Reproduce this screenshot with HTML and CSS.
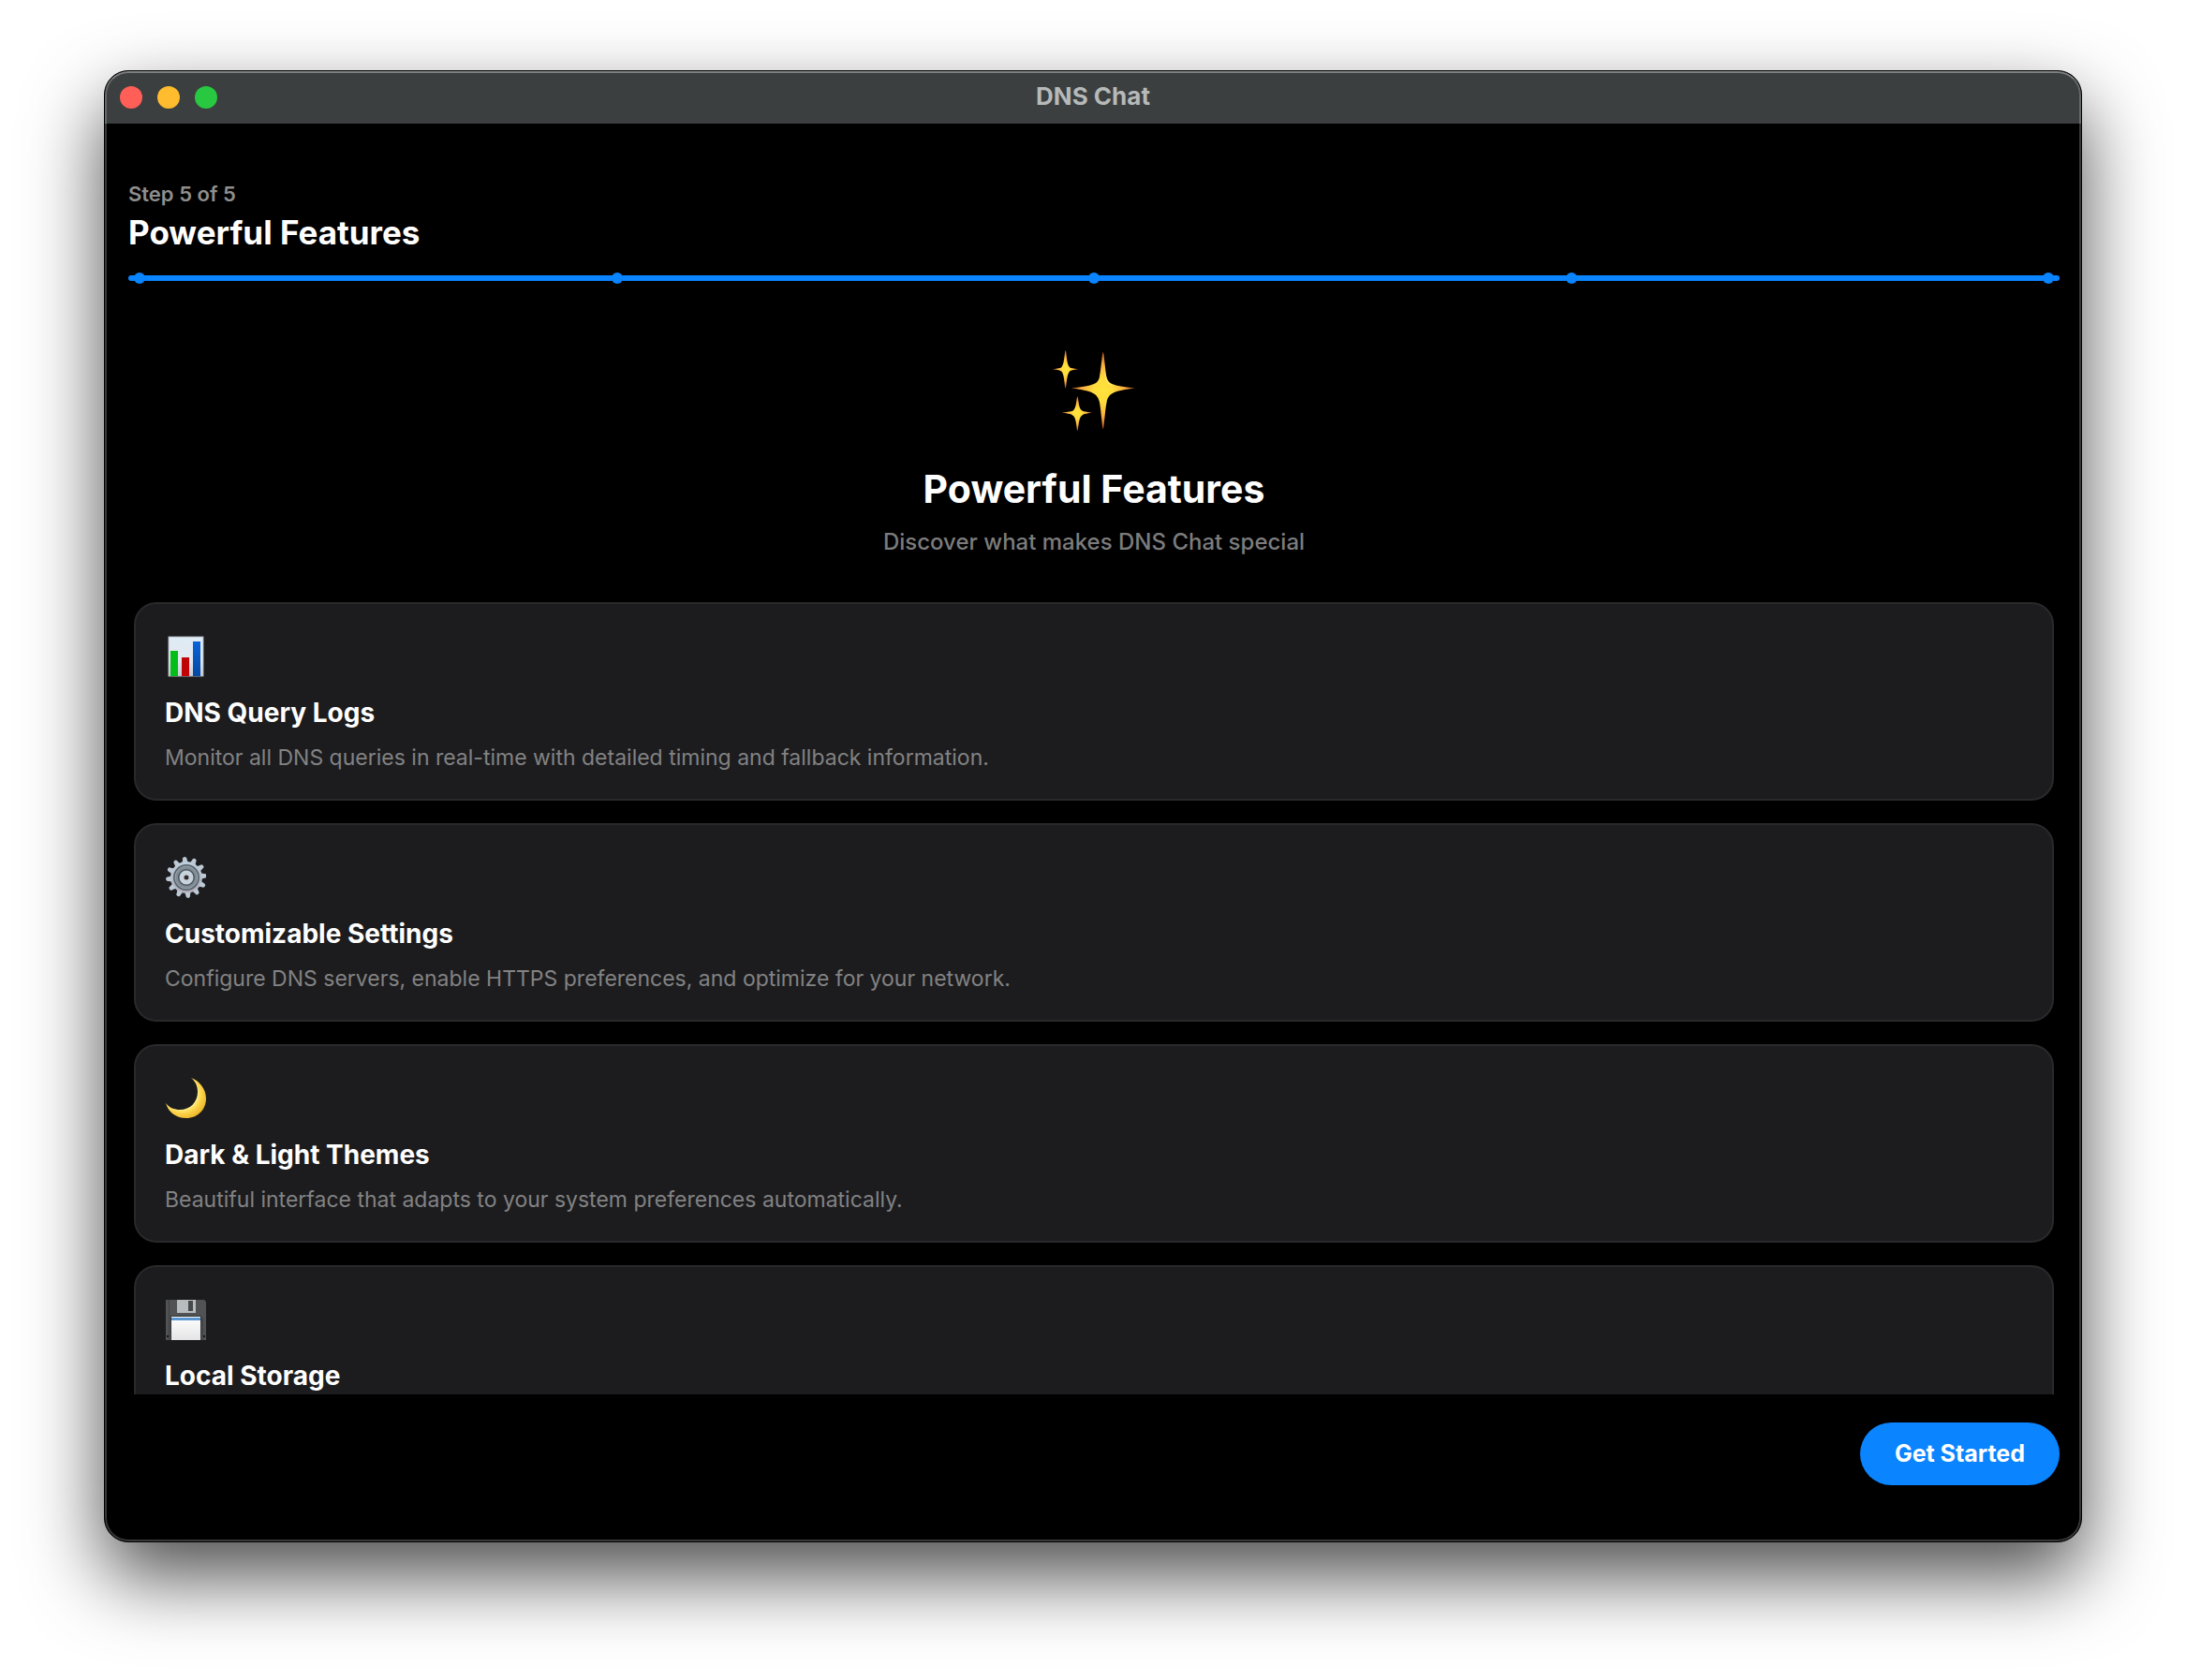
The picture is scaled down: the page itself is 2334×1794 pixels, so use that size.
FILE: index.html
```html
<!DOCTYPE html>
<html lang="en">
<head>
<meta charset="utf-8">
<meta name="viewport" content="width=device-width, initial-scale=1">
<title>DNS Chat</title>
<link rel="stylesheet" href="styles.css">
</head>
<body>
<div class="window">
  <div class="titlebar">
    <div class="controls">
      <button class="control control-close" type="button" aria-label="Close"></button>
      <button class="control control-minimize" type="button" aria-label="Minimize"></button>
      <button class="control control-zoom" type="button" aria-label="Zoom"></button>
    </div>
    <span class="titlebar-text">DNS Chat</span>
  </div>

  <header class="header">
    <p class="step">Step 5 of 5</p>
    <h1 class="page-title">Powerful Features</h1>
    <div class="progress" role="progressbar" aria-label="Onboarding progress" aria-valuemin="0" aria-valuemax="5" aria-valuenow="5">
      <span class="dot"></span><span class="dot"></span><span class="dot"></span><span class="dot"></span><span class="dot"></span>
    </div>
  </header>

  <main class="content">
    <section class="hero">
      <svg class="hero-icon" viewBox="0 0 90 89" preserveAspectRatio="none" aria-hidden="true">
        <defs>
          <radialGradient id="star">
            <stop offset="0" stop-color="#ffe23c"/>
            <stop offset=".3" stop-color="#ffdc3c"/>
            <stop offset=".65" stop-color="#fbb040"/>
            <stop offset="1" stop-color="#b9561f"/>
          </radialGradient>
        </defs>
        <path fill="url(#star)" d="M55 2C56 2 57 20 59 30C61 37 64 39 90 42C64 45 61 49 59 57C57 67 56 87 55 87C54 87 53 67 51 57C49 49 45 45 20 42C46 39 49 37 51 30C53 20 54 2 55 2Z"/>
        <path fill="#fff3a8" d="M56 20C57 32 60 37 66 39C61 38 57 36 56 20Z"/>
        <path fill="url(#star)" d="M14 0C15 0 15 15 18 18C19 20 23 20 28 21C23 22 19 22 18 24C15 28 15 42 14 42C13 42 13 28 10 24C9 22 5 22 0 21C5 20 9 20 10 18C13 15 13 0 14 0Z"/>
        <path fill="url(#star)" d="M27 51C28 51 28 63 31 66C33 68 37 68 43 69C37 70 33 70 31 73C28 76 28 89 27 89C26 89 26 76 23 73C21 70 17 70 10 69C17 68 21 68 23 66C26 63 26 51 27 51Z"/>
      </svg>
      <h2 class="hero-title">Powerful Features</h2>
      <p class="hero-text">Discover what makes DNS Chat special</p>
    </section>

    <section class="cards">
      <article class="card">
        <svg class="card-icon" viewBox="0 0 44 44" aria-hidden="true">
          <defs>
            <linearGradient id="paper" x2="0" y2="1"><stop offset="0" stop-color="#dfecf6"/><stop offset=".6" stop-color="#e2e8ef"/><stop offset="1" stop-color="#c8cad4"/></linearGradient>
            <linearGradient id="blue" x2="0" y2="1"><stop offset="0" stop-color="#0865d8"/><stop offset="1" stop-color="#0348a4"/></linearGradient>
          </defs>
          <rect x="3" y="0" width="39" height="44" fill="#0b0b0c"/>
          <rect x="4" y="1" width="37" height="42" fill="url(#paper)" stroke="#b4bac2"/>
          <rect x="6" y="16" width="8" height="27" fill="#04bd18"/>
          <rect x="18" y="23" width="8" height="20" fill="#c00406"/>
          <rect x="30" y="6" width="8" height="37" fill="url(#blue)"/>
        </svg>
        <h3 class="card-title">DNS Query Logs</h3>
        <p class="card-text">Monitor all DNS queries in real-time with detailed timing and fallback information.</p>
      </article>

      <article class="card">
        <svg class="card-icon" viewBox="0 0 44 44" aria-hidden="true">
          <defs>
            <linearGradient id="steel" x2="0" y2="1"><stop offset="0" stop-color="#bfd0dc"/><stop offset=".5" stop-color="#b3bcc9"/><stop offset="1" stop-color="#b3aab6"/></linearGradient>
          </defs>
          <g transform="translate(23 22) rotate(-5)" fill="url(#steel)">
            <circle r="17"/>
            <path id="tooth" d="M-3-16L-2-21Q0-23 2-21L3-16Z" fill="#bcc9d5"/>
            <use href="#tooth" transform="rotate(30)"/>
            <use href="#tooth" transform="rotate(60)"/>
            <use href="#tooth" transform="rotate(90)"/>
            <use href="#tooth" transform="rotate(120)"/>
            <use href="#tooth" transform="rotate(150)"/>
            <use href="#tooth" transform="rotate(180)"/>
            <use href="#tooth" transform="rotate(210)"/>
            <use href="#tooth" transform="rotate(240)"/>
            <use href="#tooth" transform="rotate(270)"/>
            <use href="#tooth" transform="rotate(300)"/>
            <use href="#tooth" transform="rotate(330)"/>
          </g>
          <circle cx="23" cy="22" r="14" fill="#59646d"/>
          <circle cx="23" cy="22" r="12" fill="#7f8b95" stroke="#98a4ae"/>
          <circle cx="23" cy="22" r="9" fill="#4e565e"/>
          <circle cx="23" cy="22" r="5" fill="#35292a" stroke="#c6d3dd" stroke-width="5"/>
        </svg>
        <h3 class="card-title">Customizable Settings</h3>
        <p class="card-text">Configure DNS servers, enable HTTPS preferences, and optimize for your network.</p>
      </article>

      <article class="card">
        <svg class="card-icon" viewBox="0 0 44 44" aria-hidden="true">
          <defs>
            <radialGradient id="moon" gradientUnits="userSpaceOnUse" cx="18" cy="17" r="27"><stop offset=".6" stop-color="#fff08a"/><stop offset=".78" stop-color="#fbd349"/><stop offset="1" stop-color="#edb92c"/></radialGradient>
          </defs>
          <path fill="url(#moon)" d="M28 0C37 3 44 12 44 22C44 34 35 43 23 43C12 43 4 37 1 27C5 32 10 34 16 34C27 34 35 26 35 15C35 9 33 4 28 0Z"/>
        </svg>
        <h3 class="card-title">Dark &amp; Light Themes</h3>
        <p class="card-text">Beautiful interface that adapts to your system preferences automatically.</p>
      </article>

      <article class="card">
        <svg class="card-icon" viewBox="0 0 44 44" aria-hidden="true">
          <defs>
            <linearGradient id="label" x2="0" y2="1"><stop offset="0" stop-color="#fff"/><stop offset="1" stop-color="#e4e4e6"/></linearGradient>
          </defs>
          <path fill="#515253" d="M1 1H42L44 3V44H1Z"/>
          <path fill="#3d3e3f" d="M4 1H5V44H4ZM40 20H41V44H40Z"/>
          <rect x="13" y="1" width="20" height="14" fill="#b9bcbf"/>
          <rect x="25" y="2" width="5" height="11" fill="#47494b"/>
          <rect x="6" y="18" width="33" height="26" fill="#303132"/>
          <rect x="7" y="19" width="31" height="25" fill="url(#label)"/>
          <rect x="7" y="20" width="31" height="3" fill="#5b97d3"/>
          <path fill="#171718" d="M2 39H4V41H2ZM41 39H43V41H41Z"/>
        </svg>
        <h3 class="card-title">Local Storage</h3>
      </article>
    </section>
  </main>

  <footer class="footer">
    <button class="primary" type="button">Get Started</button>
  </footer>
</div>
</body>
</html>
```
FILE: styles.css
```css
* {
  box-sizing: border-box;
}

body {
  margin: 0;
  height: 100vh;
  display: flex;
  padding: 75px 111px 147px;
  background: #fff;
  color: #fff;
  font-family: Inter, "Liberation Sans", sans-serif;
}

h1, h2, h3, p {
  margin: 0;
}

.window {
  position: relative;
  flex: 1;
  min-width: 0;
  display: flex;
  flex-direction: column;
  overflow: hidden;
  border: 1px solid #000;
  border-radius: 26px;
  background: #000;
  box-shadow: 0 36px 82px rgba(0, 0, 0, 0.7);
}

/* Light rim that runs just inside the window edge */
.window::after {
  content: "";
  position: absolute;
  inset: 0;
  border: 2px solid rgba(255, 255, 255, 0.22);
  border-top-color: rgba(255, 255, 255, 0.34);
  border-radius: 25px;
  pointer-events: none;
}

.titlebar {
  display: grid;
  grid-template-columns: 1fr auto 1fr;
  align-items: center;
  height: 56px;
  flex-shrink: 0;
  padding: 0 16px;
  background: #3b3f3f;
}

.controls {
  display: flex;
  gap: 16px;
}

.control {
  width: 24px;
  height: 24px;
  padding: 0;
  border: 0;
  border-radius: 50%;
}

.control-close { background: #ff5f57; }
.control-minimize { background: #febc2e; }
.control-zoom { background: #28c840; }

.titlebar-text {
  padding-bottom: 2px;
  font-size: 26px;
  line-height: 32px;
  font-weight: 700;
  color: #b6b9b9;
}

.header {
  flex-shrink: 0;
  padding: 61px 23px 27px 25px;
}

.step {
  font-size: 22px;
  line-height: 28px;
  font-weight: 600;
  color: #8e8e8e;
}

.page-title {
  margin-top: 5px;
  font-size: 35px;
  line-height: 44px;
  font-weight: 700;
}

.progress {
  display: flex;
  justify-content: space-between;
  align-items: center;
  height: 6px;
  margin-top: 24px;
  padding: 0 6px;
  border-radius: 3px;
  background: #0a84ff;
}

.dot {
  width: 12px;
  height: 12px;
  border-radius: 50%;
  background: #0a84ff;
}

.content {
  flex: 1;
  min-height: 0;
  overflow: hidden;
  padding: 47px 29px 0 31px;
}

.hero {
  display: flex;
  flex-direction: column;
  align-items: center;
  text-align: center;
}

.hero-icon {
  width: 88px;
  height: 86px;
}

.hero-title {
  margin-top: 37px;
  font-size: 41px;
  line-height: 50px;
  font-weight: 700;
}

.hero-text {
  margin-top: 16px;
  font-size: 24px;
  line-height: 32px;
  font-weight: 500;
  color: #7c7c7c;
}

.cards {
  display: flex;
  flex-direction: column;
  gap: 24px;
  margin-top: 48px;
}

.card {
  padding: 34px 31px 28px;
  border: 2px solid #29292b;
  border-radius: 24px;
  background: #1c1c1e;
}

.card-icon {
  display: block;
  width: 44px;
  height: 44px;
}

.card-title {
  margin-top: 20px;
  font-size: 28px;
  line-height: 36px;
  font-weight: 700;
}

.card-text {
  margin-top: 14px;
  font-size: 23px;
  line-height: 32px;
  color: #828283;
}

.footer {
  flex-shrink: 0;
  display: flex;
  justify-content: flex-end;
  padding: 30px 23px 60px 25px;
}

.primary {
  padding: 17px 37px 18px;
  border: 0;
  border-radius: 34px;
  background: #0a84ff;
  color: #fff;
  font: 700 25px/32px Inter, "Liberation Sans", sans-serif;
}
```
